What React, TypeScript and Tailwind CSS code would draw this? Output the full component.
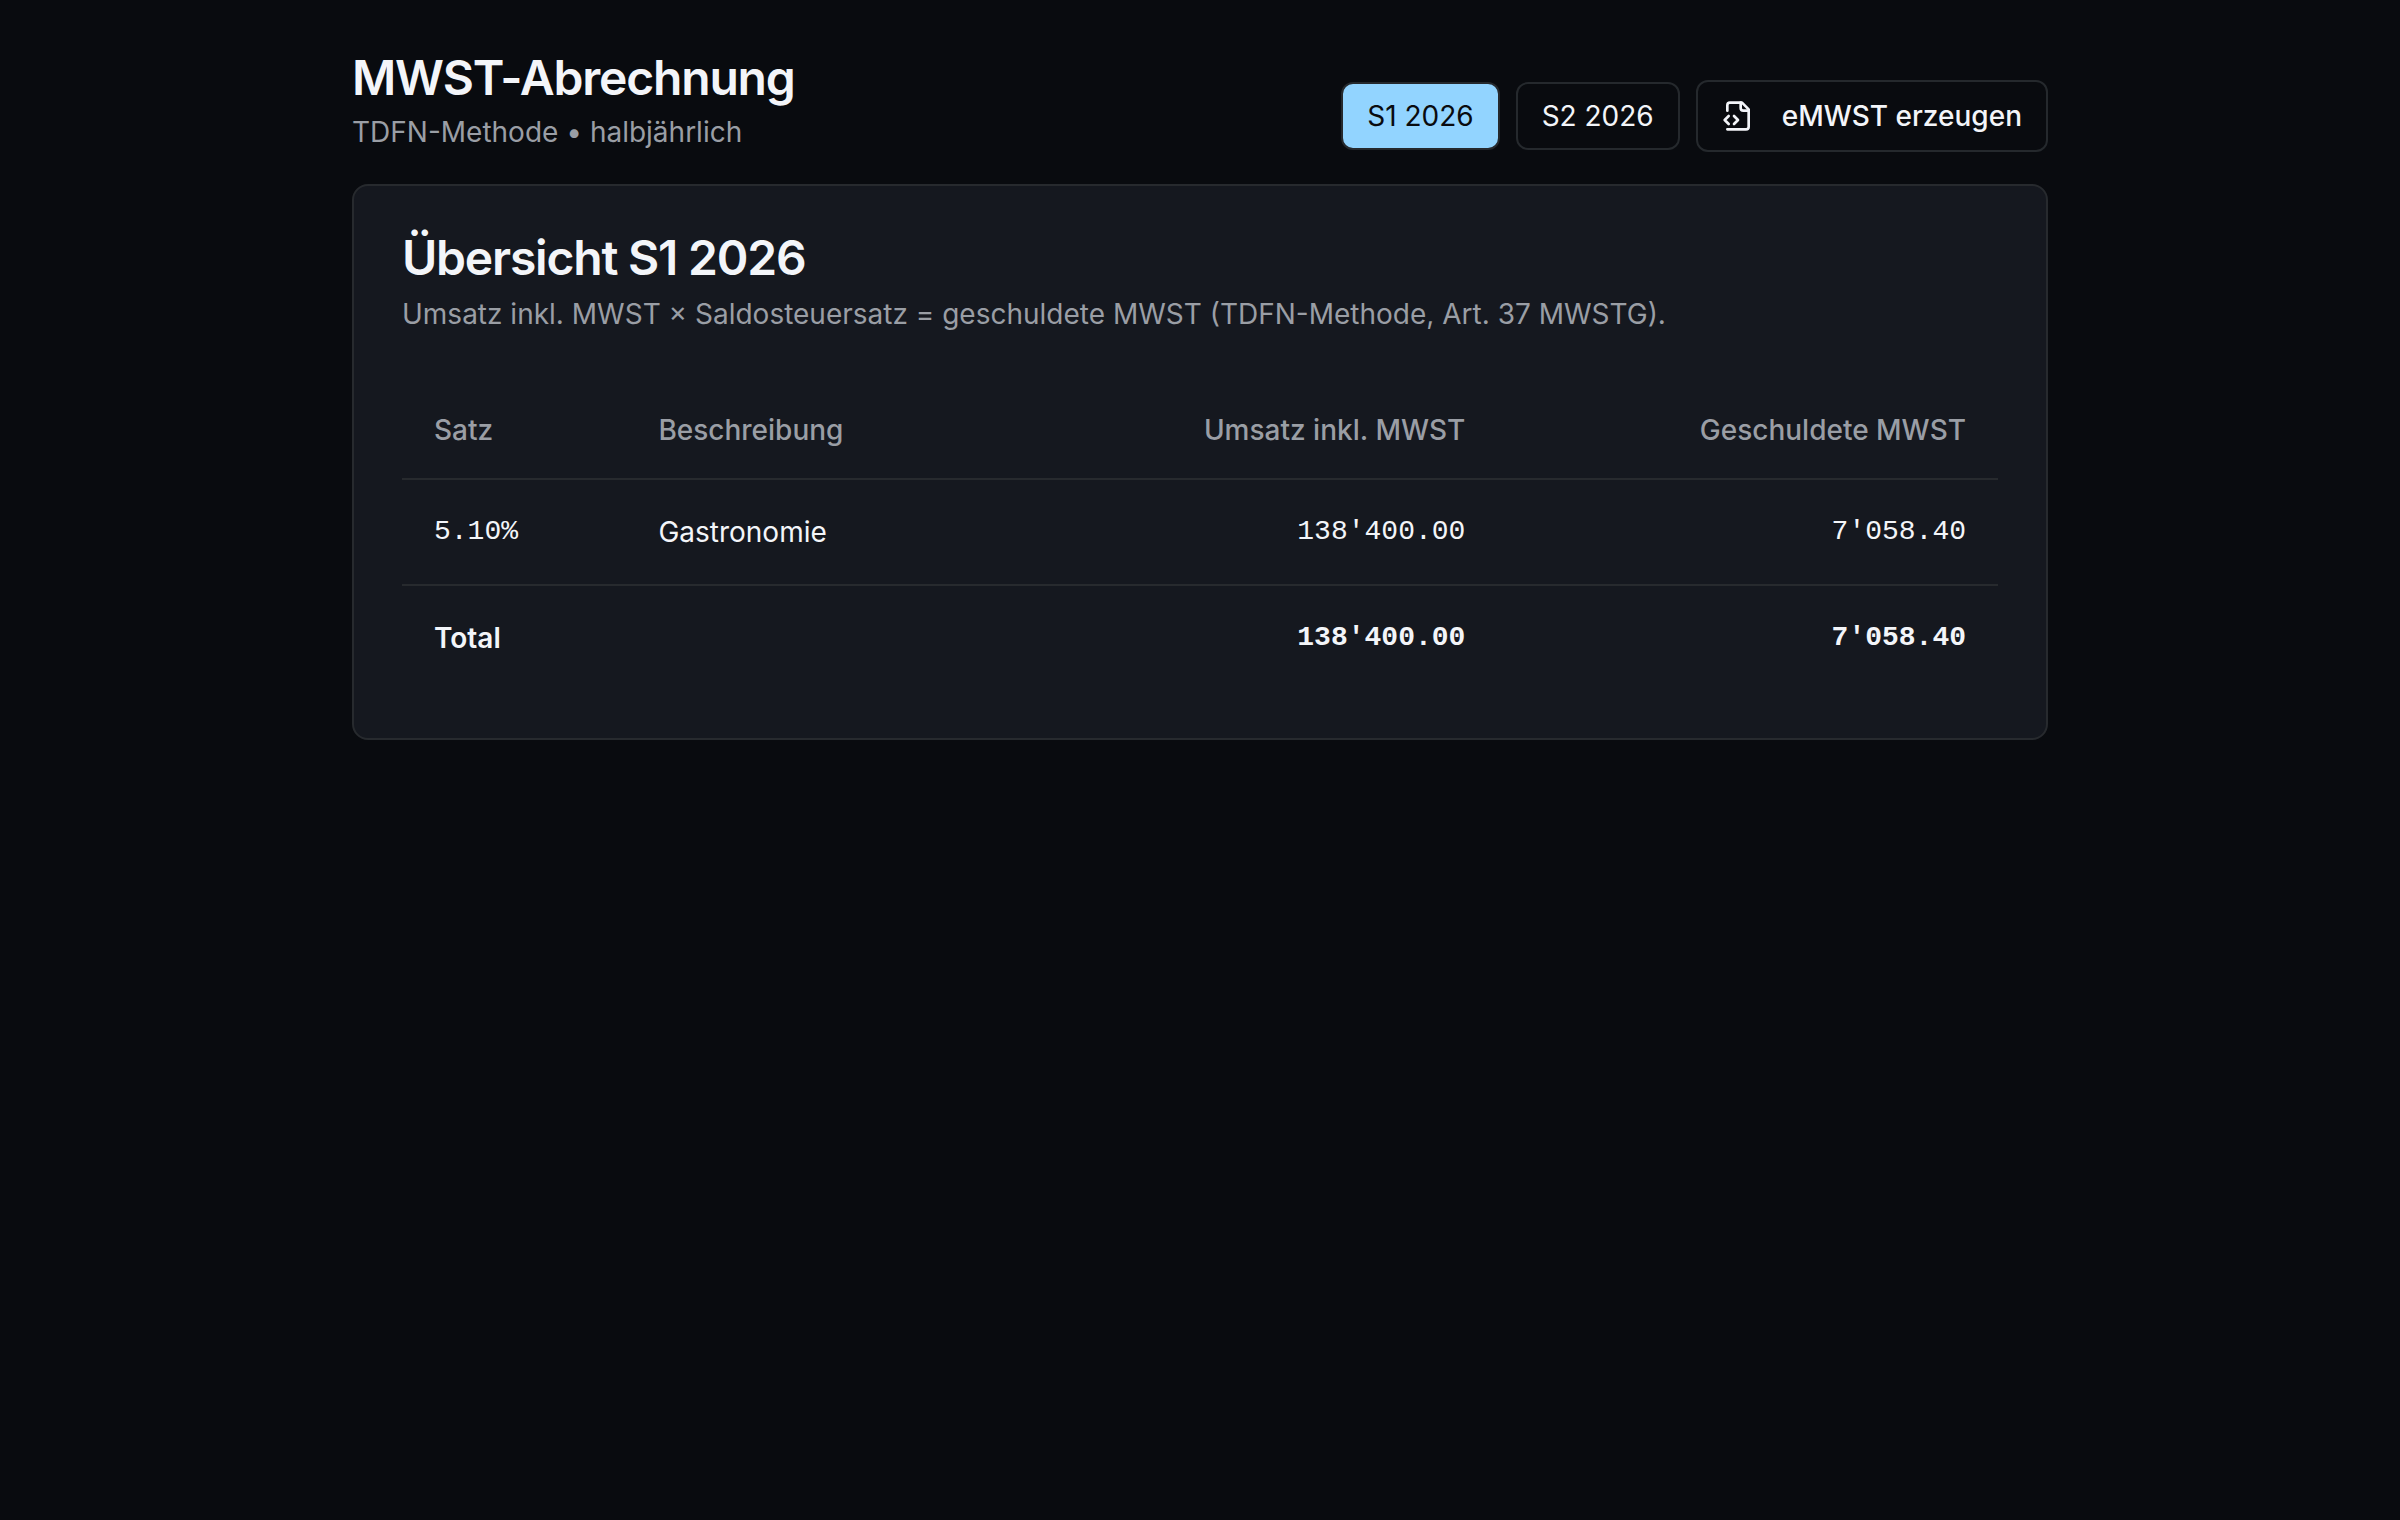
import { useState } from "react";
import clsx from "clsx";

type Rate = {
  rate: string;
  description: string;
  revenue: number;
  due: number;
};

const periods = ["S1 2026", "S2 2026"];

const rates: Rate[] = [
  { rate: "5.10%", description: "Gastronomie", revenue: 138400, due: 7058.4 },
];

const formatAmount = (value: number) =>
  value.toFixed(2).replace(/\B(?=(\d{3})+\.)/g, "'");

export default function App() {
  const [period, setPeriod] = useState(periods[0]);
  const revenue = rates.reduce((sum, r) => sum + r.revenue, 0);
  const due = rates.reduce((sum, r) => sum + r.due, 0);

  return (
    <div className="min-h-screen bg-[#090b0f] font-['Inter',sans-serif] text-[28px] leading-10 text-[#f3f5f9]">
      <main className="mx-auto max-w-[1792px] space-y-8 p-12">
        <header className="flex flex-wrap items-end justify-between gap-4">
          <div>
            <h1 className="text-5xl leading-[60px] font-semibold tracking-tight">
              MWST-Abrechnung
            </h1>
            <p className="mt-1 text-[#9a9ea5]">TDFN-Methode • halbjährlich</p>
          </div>
          <div className="flex items-center gap-4">
            {periods.map((p) => (
              <button
                key={p}
                type="button"
                onClick={() => setPeriod(p)}
                className={clsx(
                  "rounded-xl border-2 border-[#25292d] px-6 py-3",
                  p === period && "bg-[#92d4ff] text-[#090b0f]"
                )}
              >
                {p}
              </button>
            ))}
            <button
              type="button"
              className="flex h-[72px] items-center gap-7 rounded-xl border-2 border-[#25292d] px-6 font-medium"
            >
              <FileCodeIcon />
              eMWST erzeugen
            </button>
          </div>
        </header>

        <section className="rounded-2xl border-2 border-[#272a2e] bg-[#15181f] p-12">
          <h2 className="text-5xl leading-none font-semibold tracking-tight">
            Übersicht {period}
          </h2>
          <p className="mt-3 text-[#9a9ea5]">
            Umsatz inkl. MWST × Saldosteuersatz = geschuldete MWST
            (TDFN-Methode, Art. 37 MWSTG).
          </p>
          <table className="mt-12 w-full border-separate border-spacing-0">
            <thead>
              <tr className="text-left text-[#9a9ea5] *:h-[98px] *:border-b-2 *:border-[#272a2e] *:px-8 *:font-medium">
                <th>Satz</th>
                <th>Beschreibung</th>
                <th className="text-right">Umsatz inkl. MWST</th>
                <th className="text-right">Geschuldete MWST</th>
              </tr>
            </thead>
            <tbody>
              {rates.map((r) => (
                <tr
                  key={r.rate}
                  className="*:border-b-2 *:border-[#272a2e] *:px-8 *:py-8"
                >
                  <td className="font-['Liberation_Mono',monospace]">
                    {r.rate}
                  </td>
                  <td>{r.description}</td>
                  <Amount value={r.revenue} />
                  <Amount value={r.due} />
                </tr>
              ))}
              <tr className="font-semibold *:px-8 *:py-8">
                <td>Total</td>
                <td />
                <Amount value={revenue} />
                <Amount value={due} />
              </tr>
            </tbody>
          </table>
        </section>
      </main>
    </div>
  );
}

function Amount({ value }: { value: number }) {
  return (
    <td className="text-right font-['Liberation_Mono',monospace]">
      {formatAmount(value)}
    </td>
  );
}

function FileCodeIcon() {
  return (
    <svg
      className="size-8"
      viewBox="0 0 24 24"
      fill="none"
      stroke="currentColor"
      strokeWidth="2"
      strokeLinecap="round"
      strokeLinejoin="round"
      aria-hidden="true"
    >
      <path d="M4 22h14a2 2 0 0 0 2-2V7l-5-5H6a2 2 0 0 0-2 2v4" />
      <path d="M14 2v4a2 2 0 0 0 2 2h4" />
      <path d="m5 12-3 3 3 3" />
      <path d="m9 18 3-3-3-3" />
    </svg>
  );
}
